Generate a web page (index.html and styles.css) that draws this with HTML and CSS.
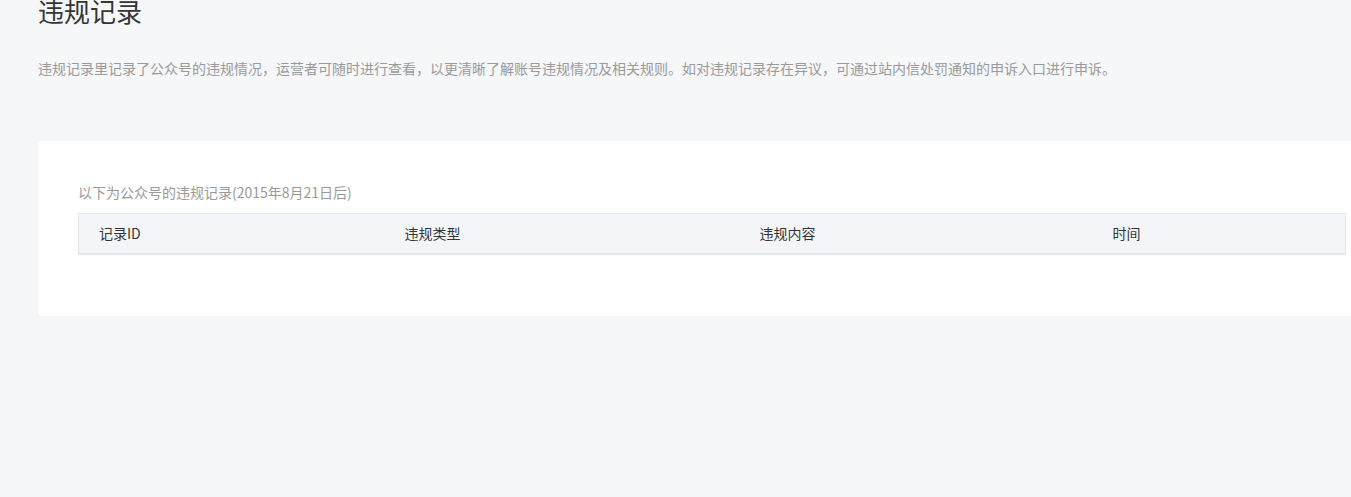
FILE: index.html
```html
<!DOCTYPE html>
<html lang="zh-CN">
<head>
    <meta charset="UTF-8">
    <meta name="viewport" content="width=device-width, initial-scale=1.0">
    <title>违规记录</title>
    <link rel="stylesheet" href="styles.css">
</head>
<body>
    <div class="page">
        <h2 class="page-title">违规记录</h2>
        <p class="page-desc">违规记录里记录了公众号的违规情况，运营者可随时进行查看，以更清晰了解账号违规情况及相关规则。如对违规记录存在异议，可通过站内信处罚通知的申诉入口进行申诉。</p>
        <div class="record-card">
            <div class="record-tips">以下为公众号的违规记录(2015年8月21日后)</div>
            <table class="record-table">
                <thead>
                    <tr>
                        <th class="col-id">记录ID</th>
                        <th class="col-type">违规类型</th>
                        <th class="col-content">违规内容</th>
                        <th class="col-time">时间</th>
                    </tr>
                </thead>
                <tbody></tbody>
            </table>
        </div>
    </div>
</body>
</html>
```

FILE: styles.css
```css
html, body {
    margin: 0;
    padding: 0;
    background: #f6f7f9;
    overflow: hidden;
}
body {
    font-family: "Microsoft YaHei", "Noto Sans CJK SC", "Liberation Sans", sans-serif;
    color: #353535;
}
.page {
    padding: 0 0 0 38px;
    width: 1347px;
}
.page-title {
    margin: 0;
    font-size: 26px;
    font-weight: normal;
    line-height: 26px;
    margin-top: -2px;
    color: #353535;
}
.page-desc {
    margin: 34px 0 0;
    font-size: 14px;
    line-height: 20px;
    color: #9a9a9a;
    white-space: nowrap;
}
.record-card {
    margin-top: 63px;
    background: #fff;
    border-radius: 3px;
    box-shadow: 0 1px 2px rgba(0, 0, 0, 0.05);
    padding: 42px 40px 61px;
}
.record-tips {
    font-size: 14px;
    line-height: 18px;
    color: #9a9a9a;
    margin-bottom: 12px;
}
.record-table {
    width: 1267px;
    border-collapse: collapse;
    table-layout: fixed;
}
.record-table th {
    box-sizing: border-box;
    background: #f4f5f9;
    border-top: 1px solid #e4e8eb;
    border-bottom: 2px solid #e4e8eb;
    height: 40px;
    padding: 0 0 0 20px;
    text-align: left;
    font-size: 14px;
    font-weight: normal;
    color: #353535;
}
.record-table th.col-id {
    border-left: 1px solid #e4e8eb;
}
.record-table th.col-time {
    border-right: 1px solid #e4e8eb;
}
.col-id { width: 306px; }
.col-type { width: 355px; }
.col-content { width: 353px; }
.col-time { width: 253px; }
```
